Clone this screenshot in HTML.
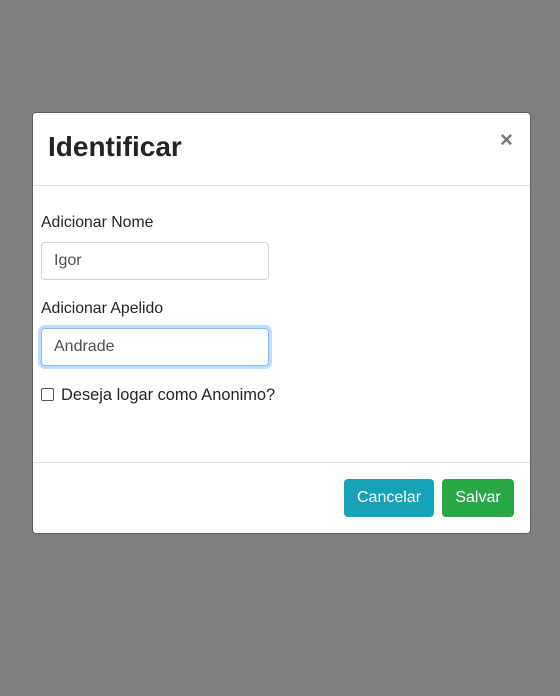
<!DOCTYPE html>
<html><head><style>
body{margin:0;width:560px;height:696px;background:#7f7f7f;font-family:"Liberation Sans",sans-serif;position:relative;overflow:hidden}
.m{position:absolute;left:32px;top:112px;width:497px;height:420px;background:#fff;border:1px solid #5f5f5f;border-radius:4px}
.h{position:absolute;left:15px;top:18px;font-size:28px;font-weight:bold;color:#212529}
.x{position:absolute;left:467px;top:14px;font-size:22px;font-weight:bold;color:#777}
.hr{position:absolute;left:0;right:0;height:1px;background:#dee2e6}
.l{position:absolute;left:8px;font-size:15.8px;color:#212529}
.i{position:absolute;left:8px;width:226px;height:36px;border:1px solid #ced4da;border-radius:4px;box-sizing:content-box;font-size:16px;color:#495057;line-height:36px;text-indent:12px}
.f{border-color:#80bdff;box-shadow:0 0 0 3px rgba(0,123,255,.25)}
.b{position:absolute;top:366px;height:38px;line-height:38px;color:#fff;font-size:16px;border-radius:4px;text-align:center}
</style></head><body>
<div class="m">
<div class="h">Identificar</div>
<div class="x">×</div>
<div class="hr" style="top:72px"></div>
<div class="l" style="top:101px">Adicionar Nome</div>
<div class="i" style="top:129px">Igor</div>
<div class="l" style="top:187px">Adicionar Apelido</div>
<div class="i f" style="top:215px">Andrade</div>
<div style="position:absolute;left:8px;top:275px;width:11px;height:11px;border:1px solid #555;border-radius:2px"></div>
<div class="l" style="top:273px;left:28px;font-size:16.4px">Deseja logar como Anonimo?</div>
<div class="hr" style="top:349px"></div>
<div class="b" style="left:311px;width:90px;background:#17a2b8">Cancelar</div>
<div class="b" style="left:409px;width:72px;background:#28a745">Salvar</div>
</div>
</body></html>
